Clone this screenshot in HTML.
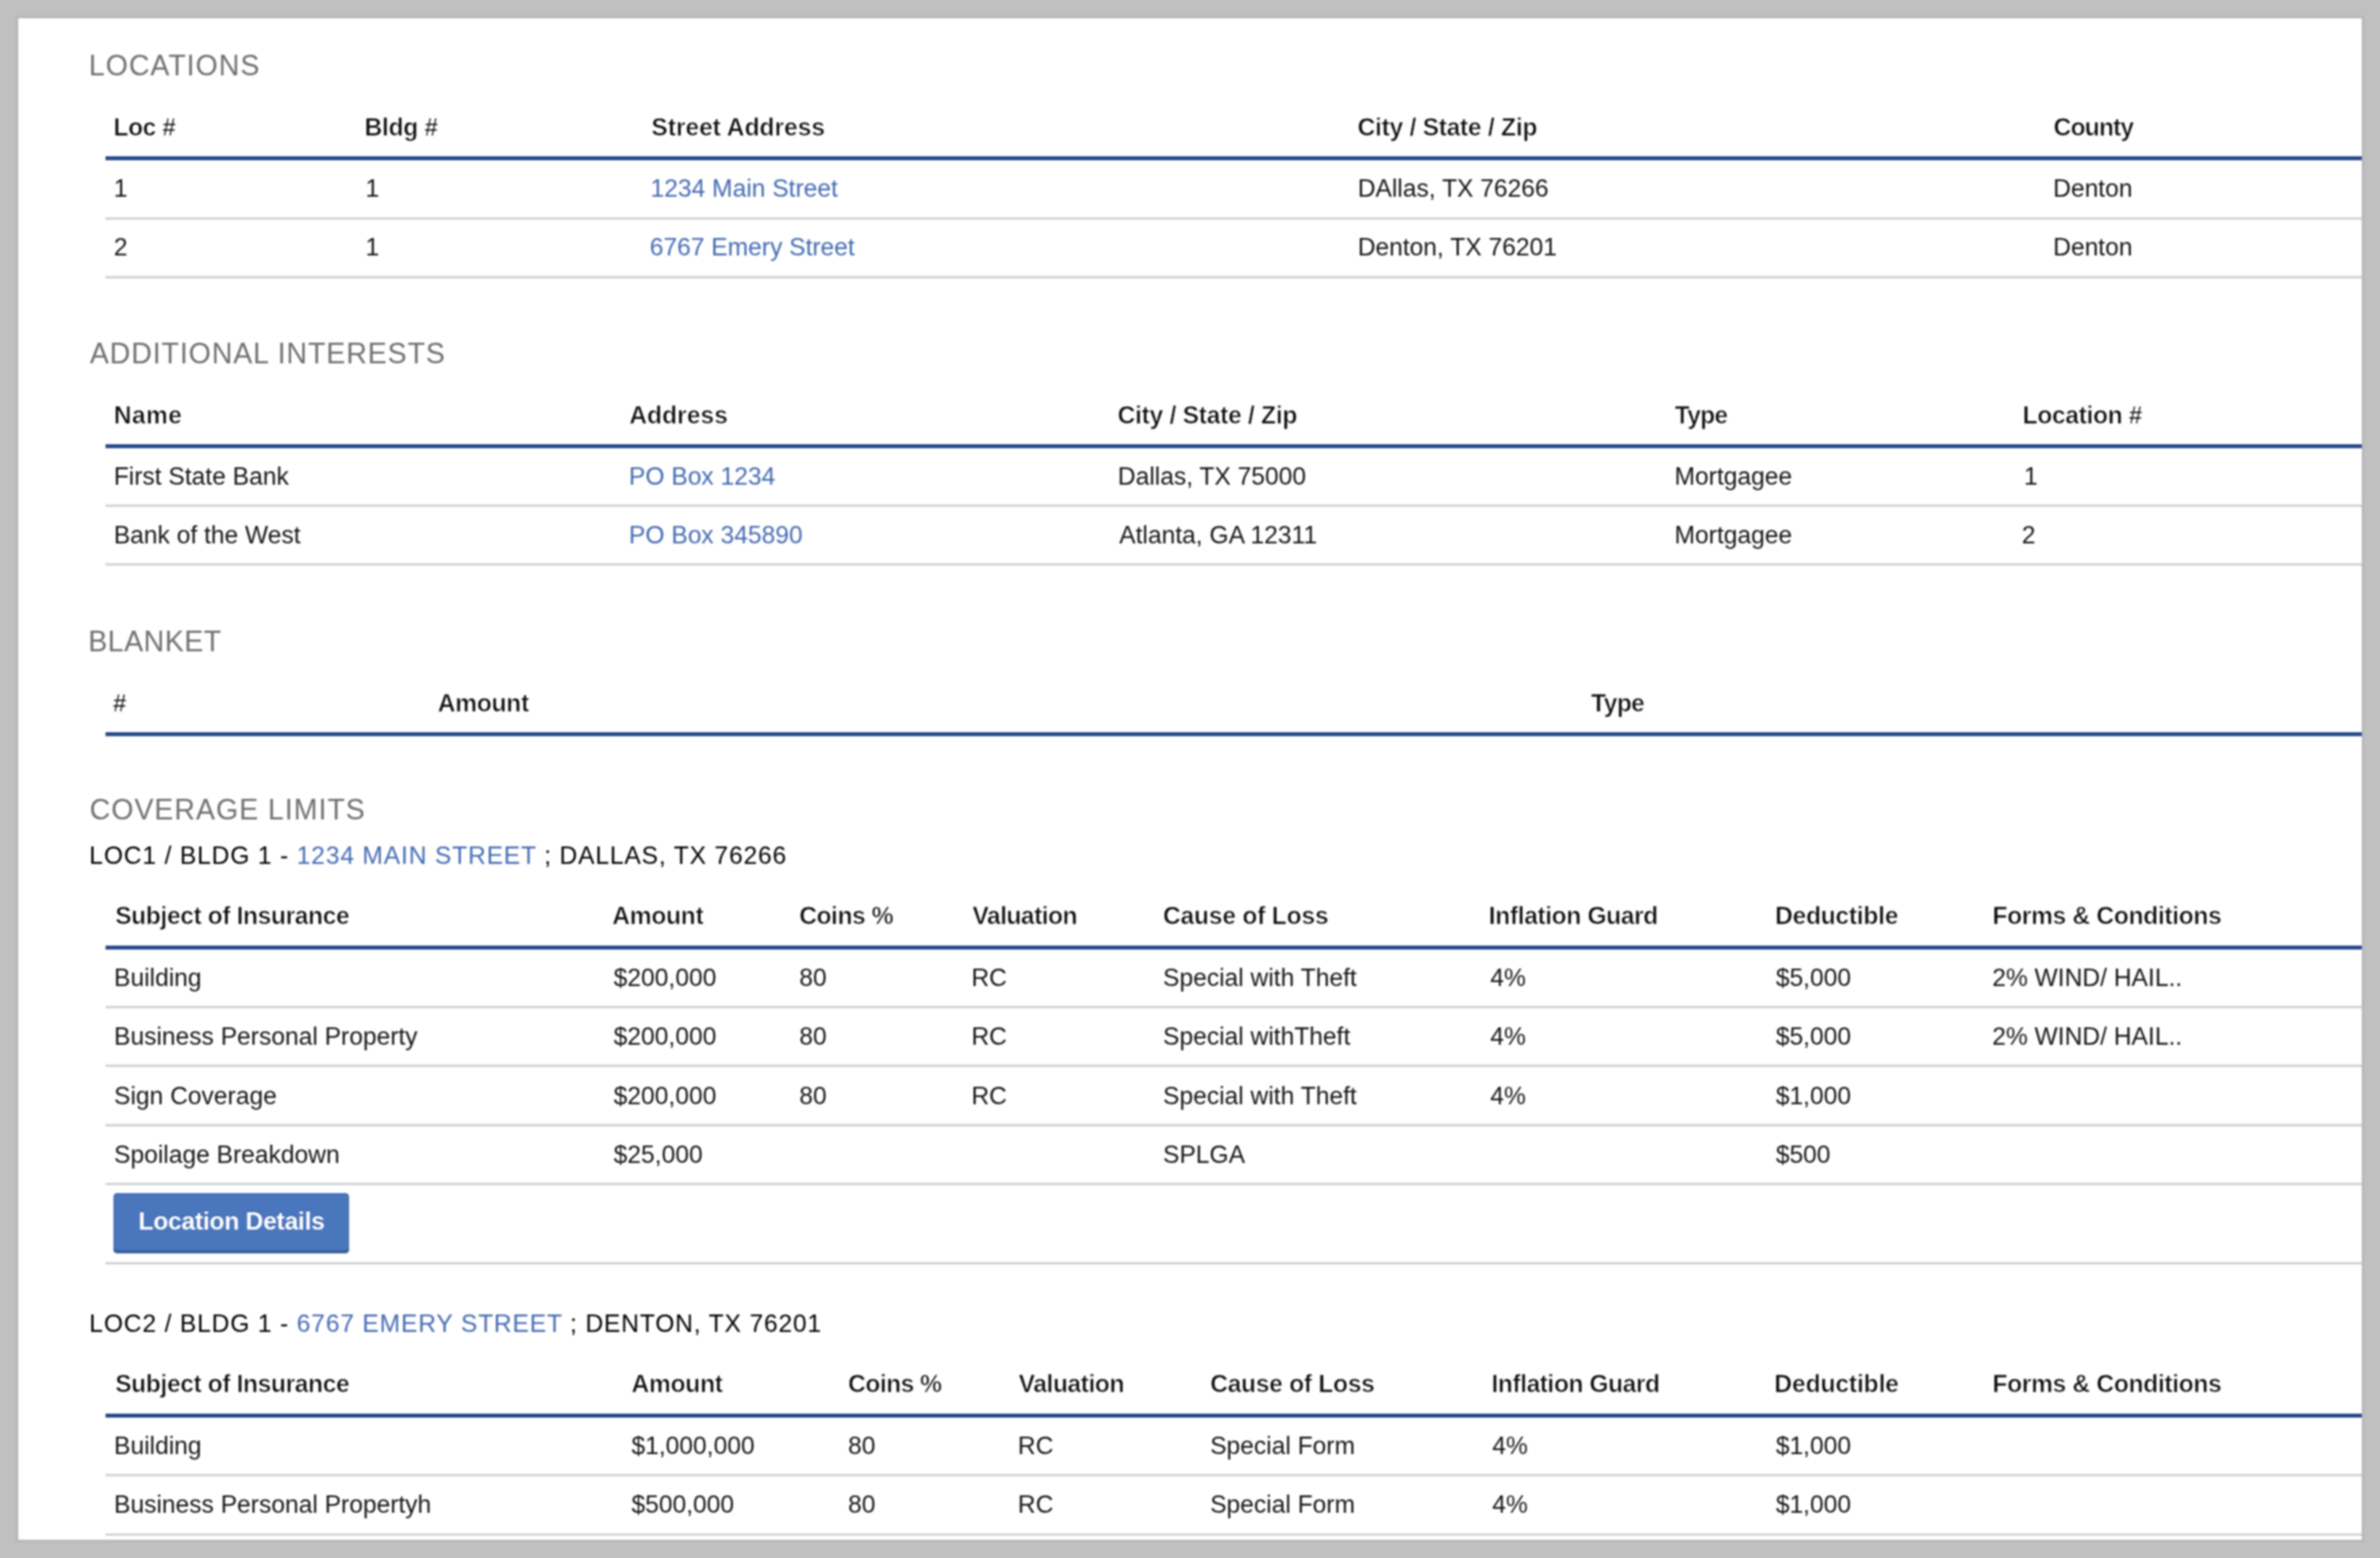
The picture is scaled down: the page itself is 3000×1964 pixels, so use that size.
<!DOCTYPE html>
<html><head><meta charset="utf-8"><title>Coverage</title>
<style>
html,body{margin:0;padding:0}
body{width:3000px;height:1964px;background:#c0c0c0;position:relative;overflow:hidden;font-family:'Liberation Sans', sans-serif}
#panel{position:absolute;left:23px;top:23px;width:2954px;height:1918px;background:#fff;overflow:hidden}
#shadow{position:absolute;left:20px;top:20px;width:2960px;height:1924px;background:#b7b7b7}
.t{position:absolute;line-height:0;white-space:nowrap}
#wrap{position:absolute;left:0;top:0;width:3000px;height:1964px;filter:blur(0.8px)}
</style></head><body>
<div id="wrap">
<div id="shadow"></div>
<div id="panel"></div>
<div class="t" id="t0" style="left:112.00px;top:83px;font-size:36px;color:#707070;letter-spacing:1.200px">LOCATIONS</div>
<div class="t" id="t1" style="left:143.00px;top:161px;font-size:31px;color:#0a0a0a;font-weight:bold;letter-spacing:-0.550px;-webkit-text-stroke:0.7px #fff;paint-order:normal">Loc #</div>
<div class="t" id="t2" style="left:459.60px;top:161px;font-size:31px;color:#0a0a0a;font-weight:bold;letter-spacing:-0.420px;-webkit-text-stroke:0.7px #fff;paint-order:normal">Bldg #</div>
<div class="t" id="t3" style="left:821.00px;top:161px;font-size:31px;color:#0a0a0a;font-weight:bold;letter-spacing:-0.038px;-webkit-text-stroke:0.7px #fff;paint-order:normal">Street Address</div>
<div class="t" id="t4" style="left:1711.20px;top:161px;font-size:31px;color:#0a0a0a;font-weight:bold;letter-spacing:-0.346px;-webkit-text-stroke:0.7px #fff;paint-order:normal">City / State / Zip</div>
<div class="t" id="t5" style="left:2588.60px;top:161px;font-size:31px;color:#0a0a0a;font-weight:bold;letter-spacing:-1.060px;-webkit-text-stroke:0.7px #fff;paint-order:normal">County</div>
<div style="position:absolute;left:133px;top:197px;width:2844px;height:5px;background:#24498a"></div>
<div class="t" id="t6" style="left:143.60px;top:238px;font-size:31px;color:#161616">1</div>
<div class="t" id="t7" style="left:460.80px;top:238px;font-size:31px;color:#161616">1</div>
<div class="t" id="t8" style="left:820.00px;top:238px;font-size:31px;color:#456bb3">1234 Main Street</div>
<div class="t" id="t9" style="left:1711.40px;top:238px;font-size:31px;color:#161616">DAllas, TX 76266</div>
<div class="t" id="t10" style="left:2588.00px;top:238px;font-size:31px;color:#161616">Denton</div>
<div style="position:absolute;left:133px;top:274px;width:2844px;height:3px;background:#d2d2d2"></div>
<div class="t" id="t11" style="left:143.40px;top:312px;font-size:31px;color:#161616">2</div>
<div class="t" id="t12" style="left:460.80px;top:312px;font-size:31px;color:#161616">1</div>
<div class="t" id="t13" style="left:819.00px;top:312px;font-size:31px;color:#456bb3">6767 Emery Street</div>
<div class="t" id="t14" style="left:1711.40px;top:312px;font-size:31px;color:#161616">Denton, TX 76201</div>
<div class="t" id="t15" style="left:2588.00px;top:312px;font-size:31px;color:#161616">Denton</div>
<div style="position:absolute;left:133px;top:348px;width:2844px;height:3px;background:#d2d2d2"></div>
<div class="t" id="t16" style="left:113.20px;top:446px;font-size:36px;color:#707070;letter-spacing:1.100px">ADDITIONAL INTERESTS</div>
<div class="t" id="t17" style="left:143.40px;top:524px;font-size:31px;color:#0a0a0a;font-weight:bold;letter-spacing:0.500px;-webkit-text-stroke:0.7px #fff;paint-order:normal">Name</div>
<div class="t" id="t18" style="left:793.20px;top:524px;font-size:31px;color:#0a0a0a;font-weight:bold;letter-spacing:0.034px;-webkit-text-stroke:0.7px #fff;paint-order:normal">Address</div>
<div class="t" id="t19" style="left:1408.80px;top:524px;font-size:31px;color:#0a0a0a;font-weight:bold;letter-spacing:-0.349px;-webkit-text-stroke:0.7px #fff;paint-order:normal">City / State / Zip</div>
<div class="t" id="t20" style="left:2111.00px;top:524px;font-size:31px;color:#0a0a0a;font-weight:bold;letter-spacing:-0.966px;-webkit-text-stroke:0.7px #fff;paint-order:normal">Type</div>
<div class="t" id="t21" style="left:2549.60px;top:524px;font-size:31px;color:#0a0a0a;font-weight:bold;letter-spacing:-0.455px;-webkit-text-stroke:0.7px #fff;paint-order:normal">Location #</div>
<div style="position:absolute;left:133px;top:560px;width:2844px;height:5px;background:#24498a"></div>
<div class="t" id="t22" style="left:143.40px;top:601px;font-size:31px;color:#161616">First State Bank</div>
<div class="t" id="t23" style="left:792.80px;top:601px;font-size:31px;color:#456bb3">PO Box 1234</div>
<div class="t" id="t24" style="left:1409.00px;top:601px;font-size:31px;color:#161616">Dallas, TX 75000</div>
<div class="t" id="t25" style="left:2110.80px;top:601px;font-size:31px;color:#161616">Mortgagee</div>
<div class="t" id="t26" style="left:2551.20px;top:601px;font-size:31px;color:#161616">1</div>
<div style="position:absolute;left:133px;top:636px;width:2844px;height:3px;background:#d2d2d2"></div>
<div class="t" id="t27" style="left:143.40px;top:675px;font-size:31px;color:#161616">Bank of the West</div>
<div class="t" id="t28" style="left:792.80px;top:675px;font-size:31px;color:#456bb3">PO Box 345890</div>
<div class="t" id="t29" style="left:1410.80px;top:675px;font-size:31px;color:#161616">Atlanta, GA 12311</div>
<div class="t" id="t30" style="left:2110.80px;top:675px;font-size:31px;color:#161616">Mortgagee</div>
<div class="t" id="t31" style="left:2548.40px;top:675px;font-size:31px;color:#161616">2</div>
<div style="position:absolute;left:133px;top:710px;width:2844px;height:3px;background:#d2d2d2"></div>
<div class="t" id="t32" style="left:111.20px;top:809px;font-size:36px;color:#707070;letter-spacing:0.600px">BLANKET</div>
<div class="t" id="t33" style="left:142.20px;top:887px;font-size:31px;color:#0a0a0a;font-weight:bold;letter-spacing:-0.500px;-webkit-text-stroke:0.7px #fff;paint-order:normal">#</div>
<div class="t" id="t34" style="left:551.80px;top:887px;font-size:31px;color:#0a0a0a;font-weight:bold;letter-spacing:-0.380px;-webkit-text-stroke:0.7px #fff;paint-order:normal">Amount</div>
<div class="t" id="t35" style="left:2005.60px;top:887px;font-size:31px;color:#0a0a0a;font-weight:bold;letter-spacing:-0.767px;-webkit-text-stroke:0.7px #fff;paint-order:normal">Type</div>
<div style="position:absolute;left:133px;top:923px;width:2844px;height:5px;background:#24498a"></div>
<div class="t" id="t36" style="left:113.00px;top:1021px;font-size:36px;color:#707070;letter-spacing:1.200px">COVERAGE LIMITS</div>
<div class="t" id="t37" style="left:112.60px;top:1079px;font-size:31px;color:#000;letter-spacing:1.050px">LOC1 / BLDG 1 - <span style="color:#456bb3">1234 MAIN STREET</span> ; DALLAS, TX 76266</div>
<div class="t" id="t38" style="left:145.20px;top:1155px;font-size:31px;color:#0a0a0a;font-weight:bold;letter-spacing:-0.490px;-webkit-text-stroke:0.7px #fff;paint-order:normal">Subject of Insurance</div>
<div class="t" id="t39" style="left:771.80px;top:1155px;font-size:31px;color:#0a0a0a;font-weight:bold;letter-spacing:-0.380px;-webkit-text-stroke:0.7px #fff;paint-order:normal">Amount</div>
<div class="t" id="t40" style="left:1007.40px;top:1155px;font-size:31px;color:#0a0a0a;font-weight:bold;letter-spacing:-0.566px;-webkit-text-stroke:0.7px #fff;paint-order:normal">Coins %</div>
<div class="t" id="t41" style="left:1225.80px;top:1155px;font-size:31px;color:#0a0a0a;font-weight:bold;letter-spacing:-0.678px;-webkit-text-stroke:0.7px #fff;paint-order:normal">Valuation</div>
<div class="t" id="t42" style="left:1466.00px;top:1155px;font-size:31px;color:#0a0a0a;font-weight:bold;letter-spacing:-0.268px;-webkit-text-stroke:0.7px #fff;paint-order:normal">Cause of Loss</div>
<div class="t" id="t43" style="left:1876.60px;top:1155px;font-size:31px;color:#0a0a0a;font-weight:bold;letter-spacing:-0.485px;-webkit-text-stroke:0.7px #fff;paint-order:normal">Inflation Guard</div>
<div class="t" id="t44" style="left:2237.40px;top:1155px;font-size:31px;color:#0a0a0a;font-weight:bold;letter-spacing:-0.320px;-webkit-text-stroke:0.7px #fff;paint-order:normal">Deductible</div>
<div class="t" id="t45" style="left:2511.60px;top:1155px;font-size:31px;color:#0a0a0a;font-weight:bold;letter-spacing:-0.431px;-webkit-text-stroke:0.7px #fff;paint-order:normal">Forms &amp; Conditions</div>
<div style="position:absolute;left:133px;top:1192px;width:2844px;height:5px;background:#24498a"></div>
<div class="t" id="t46" style="left:143.80px;top:1233px;font-size:31px;color:#161616">Building</div>
<div class="t" id="t47" style="left:773.60px;top:1233px;font-size:31px;color:#161616">$200,000</div>
<div class="t" id="t48" style="left:1007.40px;top:1233px;font-size:31px;color:#161616">80</div>
<div class="t" id="t49" style="left:1224.40px;top:1233px;font-size:31px;color:#161616">RC</div>
<div class="t" id="t50" style="left:1466.00px;top:1233px;font-size:31px;color:#161616">Special with Theft</div>
<div class="t" id="t51" style="left:1878.60px;top:1233px;font-size:31px;color:#161616">4%</div>
<div class="t" id="t52" style="left:2238.40px;top:1233px;font-size:31px;color:#161616">$5,000</div>
<div class="t" id="t53" style="left:2511.20px;top:1233px;font-size:31px;color:#161616">2% WIND/ HAIL..</div>
<div style="position:absolute;left:133px;top:1268px;width:2844px;height:3px;background:#d2d2d2"></div>
<div class="t" id="t54" style="left:143.80px;top:1307px;font-size:31px;color:#161616">Business Personal Property</div>
<div class="t" id="t55" style="left:773.60px;top:1307px;font-size:31px;color:#161616">$200,000</div>
<div class="t" id="t56" style="left:1007.40px;top:1307px;font-size:31px;color:#161616">80</div>
<div class="t" id="t57" style="left:1224.40px;top:1307px;font-size:31px;color:#161616">RC</div>
<div class="t" id="t58" style="left:1466.00px;top:1307px;font-size:31px;color:#161616">Special withTheft</div>
<div class="t" id="t59" style="left:1878.60px;top:1307px;font-size:31px;color:#161616">4%</div>
<div class="t" id="t60" style="left:2238.40px;top:1307px;font-size:31px;color:#161616">$5,000</div>
<div class="t" id="t61" style="left:2511.20px;top:1307px;font-size:31px;color:#161616">2% WIND/ HAIL..</div>
<div style="position:absolute;left:133px;top:1342px;width:2844px;height:3px;background:#d2d2d2"></div>
<div class="t" id="t62" style="left:143.80px;top:1382px;font-size:31px;color:#161616">Sign Coverage</div>
<div class="t" id="t63" style="left:773.60px;top:1382px;font-size:31px;color:#161616">$200,000</div>
<div class="t" id="t64" style="left:1007.40px;top:1382px;font-size:31px;color:#161616">80</div>
<div class="t" id="t65" style="left:1224.40px;top:1382px;font-size:31px;color:#161616">RC</div>
<div class="t" id="t66" style="left:1466.00px;top:1382px;font-size:31px;color:#161616">Special with Theft</div>
<div class="t" id="t67" style="left:1878.60px;top:1382px;font-size:31px;color:#161616">4%</div>
<div class="t" id="t68" style="left:2238.40px;top:1382px;font-size:31px;color:#161616">$1,000</div>
<div style="position:absolute;left:133px;top:1417px;width:2844px;height:3px;background:#d2d2d2"></div>
<div class="t" id="t69" style="left:143.80px;top:1456px;font-size:31px;color:#161616">Spoilage Breakdown</div>
<div class="t" id="t70" style="left:773.60px;top:1456px;font-size:31px;color:#161616">$25,000</div>
<div class="t" id="t71" style="left:1466.00px;top:1456px;font-size:31px;color:#161616">SPLGA</div>
<div class="t" id="t72" style="left:2238.40px;top:1456px;font-size:31px;color:#161616">$500</div>
<div style="position:absolute;left:133px;top:1491px;width:2844px;height:3px;background:#d2d2d2"></div>
<div style="position:absolute;left:143px;top:1504px;width:297px;height:76px;background:#4a76be;border-radius:5px;box-shadow:inset 0 -4px 0 #3a5f9e,inset 0 0 0 2px #416fb5"></div>
<div class="t" id="t73" style="left:174.50px;top:1540px;font-size:31px;color:#fff;font-weight:bold;letter-spacing:-0.300px;text-shadow:0 -1px 1px rgba(20,40,110,0.45)">Location Details</div>
<div style="position:absolute;left:133px;top:1591px;width:2844px;height:3px;background:#d2d2d2"></div>
<div class="t" id="t74" style="left:112.60px;top:1669px;font-size:31px;color:#000;letter-spacing:1.050px">LOC2 / BLDG 1 - <span style="color:#456bb3">6767 EMERY STREET</span> ; DENTON, TX 76201</div>
<div class="t" id="t75" style="left:145.20px;top:1745px;font-size:31px;color:#0a0a0a;font-weight:bold;letter-spacing:-0.490px;-webkit-text-stroke:0.7px #fff;paint-order:normal">Subject of Insurance</div>
<div class="t" id="t76" style="left:796.00px;top:1745px;font-size:31px;color:#0a0a0a;font-weight:bold;letter-spacing:-0.340px;-webkit-text-stroke:0.7px #fff;paint-order:normal">Amount</div>
<div class="t" id="t77" style="left:1069.00px;top:1745px;font-size:31px;color:#0a0a0a;font-weight:bold;letter-spacing:-0.667px;-webkit-text-stroke:0.7px #fff;paint-order:normal">Coins %</div>
<div class="t" id="t78" style="left:1284.00px;top:1745px;font-size:31px;color:#0a0a0a;font-weight:bold;letter-spacing:-0.553px;-webkit-text-stroke:0.7px #fff;paint-order:normal">Valuation</div>
<div class="t" id="t79" style="left:1525.40px;top:1745px;font-size:31px;color:#0a0a0a;font-weight:bold;letter-spacing:-0.351px;-webkit-text-stroke:0.7px #fff;paint-order:normal">Cause of Loss</div>
<div class="t" id="t80" style="left:1880.00px;top:1745px;font-size:31px;color:#0a0a0a;font-weight:bold;letter-spacing:-0.572px;-webkit-text-stroke:0.7px #fff;paint-order:normal">Inflation Guard</div>
<div class="t" id="t81" style="left:2236.60px;top:1745px;font-size:31px;color:#0a0a0a;font-weight:bold;letter-spacing:-0.166px;-webkit-text-stroke:0.7px #fff;paint-order:normal">Deductible</div>
<div class="t" id="t82" style="left:2511.60px;top:1745px;font-size:31px;color:#0a0a0a;font-weight:bold;letter-spacing:-0.431px;-webkit-text-stroke:0.7px #fff;paint-order:normal">Forms &amp; Conditions</div>
<div style="position:absolute;left:133px;top:1782px;width:2844px;height:5px;background:#24498a"></div>
<div class="t" id="t83" style="left:143.80px;top:1823px;font-size:31px;color:#161616">Building</div>
<div class="t" id="t84" style="left:796.00px;top:1823px;font-size:31px;color:#161616">$1,000,000</div>
<div class="t" id="t85" style="left:1069.00px;top:1823px;font-size:31px;color:#161616">80</div>
<div class="t" id="t86" style="left:1283.00px;top:1823px;font-size:31px;color:#161616">RC</div>
<div class="t" id="t87" style="left:1525.40px;top:1823px;font-size:31px;color:#161616">Special Form</div>
<div class="t" id="t88" style="left:1881.00px;top:1823px;font-size:31px;color:#161616">4%</div>
<div class="t" id="t89" style="left:2238.40px;top:1823px;font-size:31px;color:#161616">$1,000</div>
<div style="position:absolute;left:133px;top:1858px;width:2844px;height:3px;background:#d2d2d2"></div>
<div class="t" id="t90" style="left:143.80px;top:1897px;font-size:31px;color:#161616">Business Personal Propertyh</div>
<div class="t" id="t91" style="left:796.00px;top:1897px;font-size:31px;color:#161616">$500,000</div>
<div class="t" id="t92" style="left:1069.00px;top:1897px;font-size:31px;color:#161616">80</div>
<div class="t" id="t93" style="left:1283.00px;top:1897px;font-size:31px;color:#161616">RC</div>
<div class="t" id="t94" style="left:1525.40px;top:1897px;font-size:31px;color:#161616">Special Form</div>
<div class="t" id="t95" style="left:1881.00px;top:1897px;font-size:31px;color:#161616">4%</div>
<div class="t" id="t96" style="left:2238.40px;top:1897px;font-size:31px;color:#161616">$1,000</div>
<div style="position:absolute;left:133px;top:1933px;width:2844px;height:3px;background:#d2d2d2"></div>
</div>
</body></html>
